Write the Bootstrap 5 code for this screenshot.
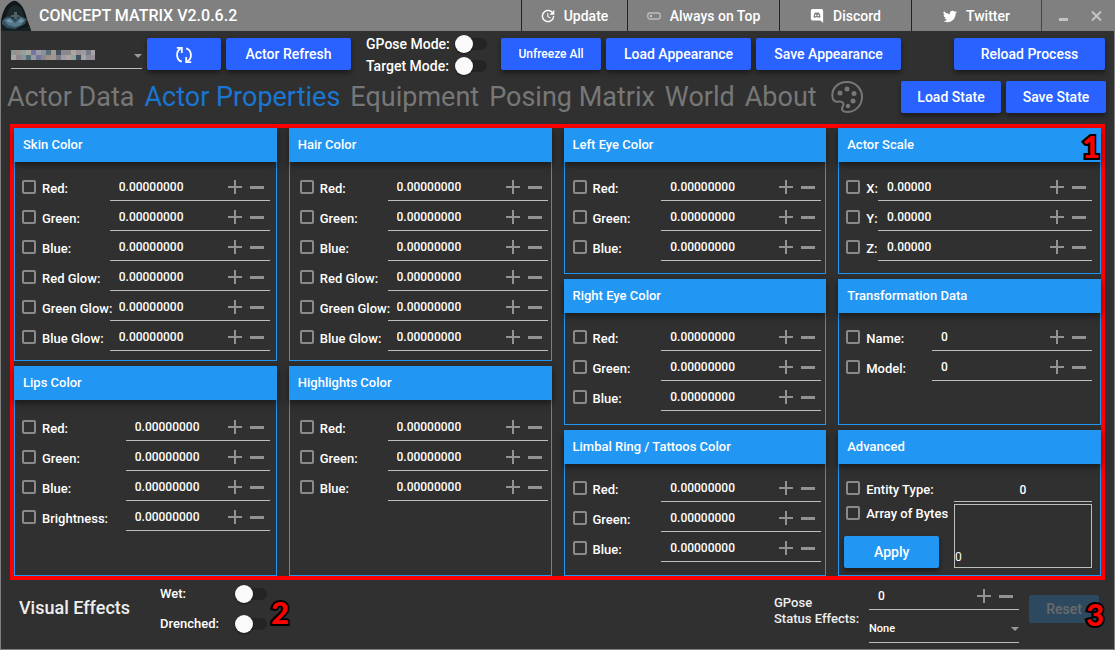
<!DOCTYPE html>
<html lang="en">
<head>
<meta charset="utf-8">
<meta name="viewport" content="width=device-width, initial-scale=1">
<title>Concept Matrix</title>
<link href="https://cdn.jsdelivr.net/npm/bootstrap@5.3.0/dist/css/bootstrap.min.css" rel="stylesheet">
<style>
:root { --line: #bdbdbd; --blue: #2196f3; --royal: #2962ff; }
body { background: #303030; color: #fff; font: 500 13px/16px Roboto, "Liberation Sans", sans-serif; border: 1px solid #808080; border-top: 0; }
button { font-family: inherit; }
/* title bar */
.titlebar { background: #808080; height: 31px; }
.app-name { font-size: 16px; padding-left: 8px; }
.logo { width: 30px; height: 31px; }
.title-btn { background: none; border: 0; border-left: 1px solid #222; color: #fff; font-size: 14px; font-weight: 500; gap: 9px; padding: 1px 0 0; }
.w-update { width: 106px; } .w-top { width: 152px; } .w-discord { width: 132px; } .w-twitter { width: 130px; }
.title-btn svg { width: 14px; height: 14px; }
.win-btns { width: 73px; border-left: 1px solid #444; }
.win-btn { background: none; border: 0; padding: 0; width: 36px; height: 31px; }
/* toolbar */
.toolbar { padding: 7px 9px 0 10px; gap: 5px; }
.raised { height: 32px; padding: 0; border: 0; border-radius: 2px; font-size: 14px; font-weight: 500; line-height: 20px; color: #fff; background: var(--royal); box-shadow: 0 3px 5px rgba(0,0,0,.45); }
.raised:hover { color: #fff; background: #4a7aff; }
.b74 { width: 74px; } .b100 { width: 100px; } .b125 { width: 125px; } .b145 { width: 145px; } .b151 { width: 151px; }
.raised.compact { font-size: 12px; }
.picker { appearance: none; background: none; border: 0; border-radius: 0; border-bottom: 1px solid var(--line); color: #fff; font-weight: 500; font-size: 11px; padding: 0; outline: 0; width: 100%; }
.actor { width: 131px; height: 31px; }
.actor .picker { height: 31px; }
.caret { right: 0; top: 50%; pointer-events: none; border: 4px solid transparent; border-top-color: #999; border-bottom: 0; }
.mosaic { left: 0; top: 11px; width: 84px; height: 12px; pointer-events: none; }
.modes { padding-left: 10px; width: 140px; font-size: 14px; gap: 4px; margin-top: -3px; }
.modes label { width: 84px; white-space: nowrap; }
.modes > div { gap: 5px; height: 18px; }
.switch { appearance: none; position: relative; width: 32px; height: 18px; margin: 0; flex: none; }
.switch::before { content: ""; position: absolute; inset: 3px 0 3px 4px; border-radius: 6px; background: #242424; }
.switch::after { content: ""; position: absolute; inset: 0 auto 0 0; width: 18px; border-radius: 50%; background: #fafafa; box-shadow: 0 1px 2px rgba(0,0,0,.5); }
/* tabs */
.tabline { padding: 6px 8px 0 6px; height: 49px; }
.tabs { gap: 10px; font-size: 27px; line-height: 32px; font-weight: 400; }
.tabs a { color: #777; text-decoration: none; white-space: nowrap; }
.tabs a.active { color: #1976d2; }
.palette { width: 32px; height: 32px; display: block; margin-left: 4px; }
.states { gap: 5px; }
/* panels */
.frame { border: 4px solid #f00; margin: 0 9px; }
.panels { display: grid; grid-template-columns: repeat(4, minmax(0, 1fr)); gap: 12px; }
.stack { gap: 5px; }
.panel { border: 1px solid var(--blue); border-top: 0; flex: 1 1 auto; }
.panel h2 { background: var(--blue); height: 34px; margin: 0 -1px; padding: 0 9px; font-size: 13px; line-height: 34px; font-weight: 500; box-shadow: 0 3px 7px rgba(0,0,0,.5); }
.panel .rows { padding: 9px 6px 9px 7px; }
.c2 .rows { padding-left: 10px; padding-right: 3px; }
.c3 .rows { padding-left: 8px; padding-right: 4px; }
.c4 .rows { padding-right: 8px; }
.panel .rows.low { padding-top: 11px; padding-bottom: 44px; }
.panel .rows.short { padding-bottom: 74px; }
.third { flex: 1 1 0; }
.third .rows { padding-top: 8px; padding-bottom: 12px; }
.third.first .rows { padding-top: 9px; }
.rowline { height: 30px; }
.rowline label { flex: 1 1 0; min-width: 0; white-space: nowrap; padding-top: 5px; }
.tick { appearance: none; width: 14px; height: 14px; margin: 2px 6px 0 0; border: 2px solid #8a8a8a; border-radius: 2px; flex: none; }
.tick:checked { background: var(--blue); border-color: var(--blue); }
.field { border-bottom: 1px solid var(--line); height: 30px; width: 160px; padding: 2px 6px 0 9px; gap: 8px; }
.field.w144 { width: 144px; } .field.w214 { width: 214px; } .field.w138 { width: 138px; padding-left: 6px; } .field.w150 { width: 150px; }
.field input { background: none; border: 0; outline: 0; color: #fff; padding: 0; font: inherit; font-size: 12px; flex: 1 1 0; min-width: 0; }
.step { background: none; border: 0; padding: 0; width: 14px; height: 14px; display: block; flex: none; }
.step svg { display: block; width: 14px; height: 14px; fill: #929292; }
.left-part { width: 107px; }
.bytes { width: 138px; height: 64px; border: 1px solid var(--line); margin-top: 2px; padding: 44px 0 0; background: none; color: #fff; font-size: 12px; resize: none; outline: 0; overflow: hidden; line-height: 16px; }
.apply { width: 95px; background: var(--blue); margin: 14px 0 0 -2px; }
/* footer */
.foot { padding: 0 15px 6px 18px; }
.foot h1 { font-size: 18px; font-weight: 500; line-height: 24px; margin: 0; width: 141px; padding-bottom: 8px; color: #eee; }
.fx { gap: 12px; padding-bottom: 6px; }
.fx > div { height: 18px; width: 107px; }
.status { width: 95px; color: #eee; padding-bottom: 2px; }
.reset { width: 70px; height: 28px; border: 0; border-radius: 2px; background: #2d495f; color: #6b6b6b; font-size: 14px; font-weight: 500; padding: 0; margin: 0 0 5px 10px; }
.mark-no { color: #f00; font: 900 31px/30px Lato, sans-serif; -webkit-text-stroke: 4px #000; paint-order: stroke fill; }
.no1 { right: 1px; top: 3px; }
.no3 { right: -5px; top: 4px; }
.none-pick { height: 32px; margin-top: 1px; }
.none-pick .picker { height: 32px; padding-top: 4px; }
</style>
</head>
<body class="min-vh-100 d-flex flex-column">
<header class="titlebar d-flex align-items-stretch">
  <svg class="logo" viewBox="0 0 30 31" aria-hidden="true">
    <path fill="#111819" d="M0 31V21C1 14 4 5 10 2Q14-1 18 3C24 8 25 16 27 22L30 30V31Z"/>
    <path fill="#1d282c" d="M5 18C6 10 9 6 14 5C20 6 23 11 23 18L18 22H9Z"/>
    <path fill="#35505f" d="M1 21Q5 15 10 17L14 20L19 16L26 19L24 24L14 29L6 28L1 24Z"/>
    <path fill="#54798c" d="M3 20L9 18L14 23L20 17L24 20L20 25L14 27L7 25Z"/>
    <path fill="#7fa0ae" d="M5 20L9 19L12 22L9 23ZM17 21L21 19L23 21L19 23Z" opacity=".7"/>
    <path fill="#758a91" d="M13 12H16V19H13ZM10 15H18V17H10Z" opacity=".6"/>
    <path fill="#14232a" d="M0 24L8 29L18 29L29 26V31H0Z" opacity=".7"/>
  </svg>
  <div class="app-name me-auto align-self-center">CONCEPT MATRIX V2.0.6.2</div>
  <button class="title-btn w-update d-flex align-items-center justify-content-center" type="button"><svg viewBox="2 2 20 20" fill="#fff"><path d="M21 10.120H14.220L16.960 7.300C14.230 4.600 9.810 4.500 7.080 7.200C4.350 9.910 4.350 14.280 7.080 17S14.230 19.700 16.960 17C18.320 15.650 19 14.080 19 12.100H21C21 14.080 20.120 16.650 18.360 18.390C14.850 21.870 9.150 21.870 5.640 18.390C2.140 14.920 2.110 9.280 5.620 5.810S14.930 2.330 18.440 5.810L21 3V10.120M12.500 8V12.250L16 14.330L15.280 15.540L11 13V8H12.500Z"/></svg>Update</button>
  <button class="title-btn w-top d-flex align-items-center justify-content-center" type="button"><svg viewBox="0 0 14 14" fill="none"><rect x=".7" y="4" width="12.600" height="6" rx="2.500" stroke="#bcbcbc" stroke-width="1.300"/><circle cx="4" cy="7" r="1.200" fill="#c8c8c8"/></svg>Always on Top</button>
  <button class="title-btn w-discord d-flex align-items-center justify-content-center" type="button"><svg viewBox="0 0 14 16"><path fill="#fff" d="M2 0H12Q14 0 14 2V16L11 13H2Q0 13 0 11.500V2Q0 0 2 0Z"/><path fill="#808080" d="M3 9.500Q3 6 4.500 4.200L6 3.700L6.500 4.300H7.500L8 3.700L9.500 4.200Q11 6 11 9.500L9.200 10.400L8.500 9.500H5.500L4.800 10.400Z"/><circle cx="5.500" cy="7.300" r=".9" fill="#fff"/><circle cx="8.500" cy="7.300" r=".9" fill="#fff"/></svg>Discord</button>
  <button class="title-btn w-twitter d-flex align-items-center justify-content-center" type="button"><svg viewBox="0 0 16 16" fill="#fff"><path d="M5.026 15c6.038 0 9.341-5.003 9.341-9.334 0-.140 0-.282-.006-.422A6.685 6.685 0 0 0 16 3.542a6.658 6.658 0 0 1-1.889.518 3.301 3.301 0 0 0 1.447-1.817 6.533 6.533 0 0 1-2.087.793A3.286 3.286 0 0 0 7.875 6.030a9.325 9.325 0 0 1-6.767-3.429 3.289 3.289 0 0 0 1.018 4.382A3.323 3.323 0 0 1 .640 6.575v.045a3.288 3.288 0 0 0 2.632 3.218 3.203 3.203 0 0 1-.865.115 3.230 3.230 0 0 1-.614-.057 3.283 3.283 0 0 0 3.067 2.277A6.588 6.588 0 0 1 .780 13.580a6.320 6.320 0 0 1-.780-.045A9.344 9.344 0 0 0 5.026 15z"/></svg>Twitter</button>
  <div class="win-btns d-flex">
    <button class="win-btn" type="button" aria-label="Minimize"><svg width="36" height="31" viewBox="0 0 36 31"><path fill="#c4c4c4" d="M17 18h9v3h-9z"/></svg></button>
    <button class="win-btn" type="button" aria-label="Close"><svg width="36" height="31" viewBox="0 0 36 31"><path d="M14 11.500l9 9m0-9l-9 9" stroke="#c4c4c4" stroke-width="2"/></svg></button>
  </div>
</header>

<div class="toolbar d-flex align-items-start">
  <div class="actor position-relative">
    <select class="picker" aria-label="Actor"><option></option></select>
    <svg class="mosaic position-absolute" viewBox="0 0 84 12" aria-hidden="true" id="mosaic"></svg>
    <span class="caret position-absolute"></span>
  </div>
  <button class="btn raised b74" type="button" aria-label="Refresh list"><svg width="18" height="18" viewBox="0 0 18 18" fill="none" stroke="#fff" stroke-width="1.800"><path d="M6.800 15.700C1 14 .5 5.500 5.500 2.800M11.200 2.300C17 4 17.500 12.500 12.500 15.200"/><path d="M1.800 1.800H6.800V7M16.200 16.200H11.200V11"/></svg></button>
  <button class="btn raised b125" type="button">Actor Refresh</button>
  <div class="modes d-flex flex-column">
    <div class="d-flex align-items-center"><label for="gpose">GPose Mode:</label><input class="switch" type="checkbox" role="switch" id="gpose"></div>
    <div class="d-flex align-items-center"><label for="target">Target Mode:</label><input class="switch" type="checkbox" role="switch" id="target"></div>
  </div>
  <button class="btn raised b100 compact" type="button">Unfreeze All</button>
  <button class="btn raised b145" type="button">Load Appearance</button>
  <button class="btn raised b145" type="button">Save Appearance</button>
  <button class="btn raised b151 ms-auto" type="button">Reload Process</button>
</div>

<div class="tabline d-flex align-items-start">
  <nav class="tabs d-flex me-auto">
    <a href="#">Actor Data</a><a href="#" class="active">Actor Properties</a><a href="#">Equipment</a><a href="#">Posing Matrix</a><a href="#">World</a><a href="#">About</a>
    <a href="#" aria-label="Theme"><svg class="palette" viewBox="0 0 32 32" fill="none" stroke="#777" stroke-width="2"><path d="M2 18C-1 8 7 1 16 1C25 1 31 8 31 16C31 25 24 31 16 31C12 31 10 29 11.500 26C14 22 11 20 8 20.500C5 21 3 21 2 18Z"/><g fill="#777" stroke="none"><circle cx="9" cy="12" r="2.500"/><circle cx="16" cy="8" r="2.500"/><circle cx="23" cy="12.500" r="2.500"/><circle cx="22" cy="20" r="2.500"/><circle cx="17" cy="25" r="2.200"/></g></svg></a>
  </nav>
  <div class="states d-flex">
    <button class="btn raised b100" type="button">Load State</button>
    <button class="btn raised b100" type="button">Save State</button>
  </div>
</div>

<main class="frame position-relative flex-grow-1 d-flex">
  <div class="panels flex-grow-1" id="panels"></div>
  <span class="mark-no no1 position-absolute">1</span>
</main>

<footer class="foot d-flex align-items-center">
  <h1>Visual Effects</h1>
  <div class="fx d-flex flex-column">
    <div class="d-flex align-items-center justify-content-between"><label for="wet">Wet:</label><input class="switch" type="checkbox" role="switch" id="wet"></div>
    <div class="d-flex align-items-center justify-content-between"><label for="drenched">Drenched:</label><input class="switch" type="checkbox" role="switch" id="drenched"></div>
  </div>
  <span class="mark-no ms-1 me-auto">2</span>
  <label class="status" for="status-id">GPose<br>Status Effects:</label>
  <div>
    <div class="field w150 d-flex align-items-center"><input type="text" id="status-id" value="0"><button class="step" type="button" aria-label="Increase"><svg viewBox="0 0 14 14"><path d="M6 0h2v6h6v2H8v6H6V8H0V6h6z"/></svg></button><button class="step" type="button" aria-label="Decrease"><svg viewBox="0 0 14 14"><path d="M0 6h14v3H0z"/></svg></button></div>
    <div class="none-pick position-relative"><select class="picker" aria-label="Status effect"><option>None</option></select><span class="caret position-absolute"></span></div>
  </div>
  <div class="position-relative"><button class="reset" type="button" disabled>Reset</button><span class="mark-no no3 position-absolute">3</span></div>
</footer>

<script>
const steps = `<button class="step" type="button" aria-label="Increase"><svg viewBox="0 0 14 14"><path d="M6 0h2v6h6v2H8v6H6V8H0V6h6z"/></svg></button><button class="step" type="button" aria-label="Decrease"><svg viewBox="0 0 14 14"><path d="M0 6h14v3H0z"/></svg></button>`;
let uid = 0;
const row = (name, value, width) => {
  const id = 'p' + (++uid);
  return `<div class="rowline d-flex align-items-center"><input class="tick" type="checkbox" id="${id}"><label for="${id}">${name}:</label><div class="field ${width} d-flex align-items-center"><input type="text" aria-label="${name}" value="${value}">${steps}</div></div>`;
};
const rgb = ['Red', 'Green', 'Blue'], glow = rgb.map(c => c + ' Glow');
const panel = (title, names, cls = '', rows = '', value = '0.00000000', width = '') =>
  `<section class="panel ${cls}"><h2>${title}</h2><div class="rows ${rows}">${names.map(n => row(n, value, width)).join('')}</div></section>`;
const advanced = `<section class="panel third"><h2>Advanced</h2><div class="rows pb-0">
  <div class="d-flex justify-content-between">
    <div class="left-part">
      <div class="rowline d-flex align-items-center"><input class="tick" type="checkbox" id="entity"><label for="entity">Entity Type:</label></div>
      <div class="d-flex align-items-center"><input class="tick" type="checkbox" id="array"><label class="text-nowrap pt-1" for="array">Array of Bytes</label></div>
      <button class="btn raised apply" type="button">Apply</button>
    </div>
    <div class="d-flex flex-column">
      <div class="field w138 d-flex align-items-center"><input class="text-center pt-1" type="text" aria-label="Entity type value" value="0"></div>
      <textarea class="bytes" aria-label="Bytes">0</textarea>
    </div>
  </div></div></section>`;
const stack = (cls, html) => `<div class="stack d-flex flex-column ${cls}">${html}</div>`;
document.getElementById('panels').innerHTML =
  stack('c1', panel('Skin Color', [...rgb, ...glow]) + panel('Lips Color', [...rgb, 'Brightness'], '', 'low', '0.00000000', 'w144')) +
  stack('c2', panel('Hair Color', [...rgb, ...glow]) + panel('Highlights Color', rgb, '', 'low short')) +
  stack('c3', panel('Left Eye Color', rgb, 'third first') + panel('Right Eye Color', rgb, 'third') + panel('Limbal Ring / Tattoos Color', rgb, 'third')) +
  stack('c4', panel('Actor Scale', ['X', 'Y', 'Z'], 'third first', '', '0.00000', 'w214') + panel('Transformation Data', ['Name', 'Model'], 'third', '', '0') + advanced);

// pixelated actor name
const tones = ['#8a9796','#9b928e','#8ea3a2','#a9a6a0','#74779b','#9a9dac','#8b9099','#55707b','#a2988f','#40505c','#8e8790','#87878c','#b0a59e','#9b9095','#9a9ca3','#7a7986','#a5a2a8'];
document.getElementById('mosaic').innerHTML = tones.map((c, i) => `<rect x="${i * 5}" y="1" width="5" height="5" fill="${c}"/><rect x="${i * 5}" y="6" width="5" height="5" fill="${tones[(i * 7 + 3) % 17]}"/>`).join('');
</script>
<script src="https://cdn.jsdelivr.net/npm/bootstrap@5.3.0/dist/js/bootstrap.bundle.min.js"></script>
</body>
</html>
